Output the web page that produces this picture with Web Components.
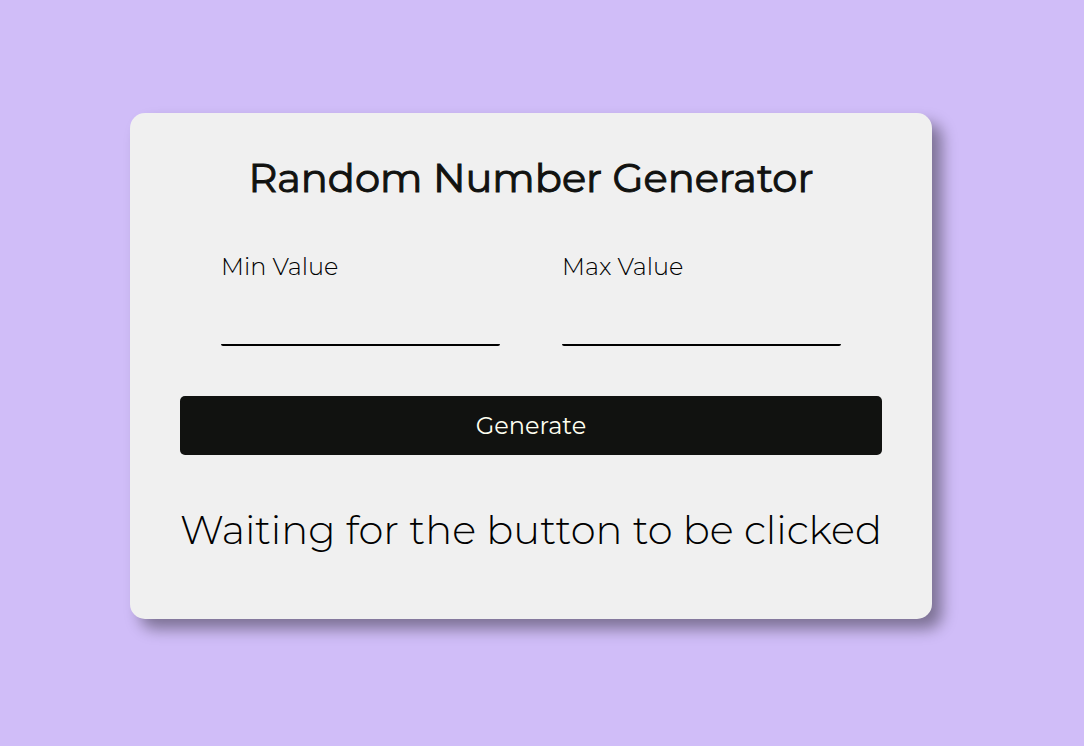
<!DOCTYPE html>
<html lang="en">
<head>
<meta charset="utf-8">
<title>Random Number Generator</title>
<style>
html,body{margin:0;height:100%}
body{min-height:100%;background:#d0bdf8;color:#111210;font-family:Montserrat,Inter,"Open Sans",sans-serif}
</style>
</head>
<body>
<number-generator>
<page-title slot="title">Random Number Generator</page-title>
<value-field slot="fields" label="Min Value"></value-field>
<value-field slot="fields" label="Max Value"></value-field>
<action-button slot="action">Generate</action-button>
<result-text slot="result">Waiting for the button to be clicked</result-text>
</number-generator>
<script>
const define=(name,html,setup)=>customElements.define(name,class extends HTMLElement{
  constructor(){
    super();
    const t=document.createElement('template');
    t.innerHTML=html;
    this.attachShadow({mode:'open'}).append(t.content.cloneNode(true));
  }
  connectedCallback(){if(setup)setup(this)}
});
define('page-title',`<style>:host{display:block}h1{margin:0;font-size:40px;line-height:50px;font-weight:400;-webkit-text-stroke:1px currentColor;text-align:center}</style><h1><slot></slot></h1>`);
define('value-field',`<style>:host{display:block;flex:1;min-width:0;contain:inline-size}label{display:block;color:#000;font-size:24px;line-height:30px;font-weight:300}input{display:block;box-sizing:border-box;width:100%;height:56px;margin:8px 0 0;padding:8px;border:0;border-bottom:2px solid #000;border-radius:2px;background:transparent;font:inherit;font-size:24px;color:inherit;outline:0}</style><label for="value"></label><input id="value" type="number">`,
 el=>{el.shadowRoot.querySelector('label').textContent=el.getAttribute('label')});
define('action-button',`<style>:host{display:block}button{display:block;width:100%;height:59px;border:0;border-radius:5px;background:#111210;color:#fffff0;font:inherit;font-size:24px;font-weight:400;cursor:pointer}</style><button type="button"><slot></slot></button>`);
define('result-text',`<style>:host{display:block}p{margin:0;color:#000;font-size:40px;line-height:50px;font-weight:300;text-align:center}</style><p><slot></slot></p>`);
define('number-generator',`<style>
:host{display:grid;place-items:center;min-height:100%;box-sizing:border-box;padding:0 22px 14px 0}
main{box-sizing:border-box;max-width:100%;padding:40px 50px 64px;border-radius:15px;background:#f0f0f0;box-shadow:10px 10px 15px rgba(0,0,0,.4)}
.fields{display:flex;gap:62px;margin:49px 41px 50px}
.result{margin-top:50px}
</style><main><slot name="title"></slot><div class="fields"><slot name="fields"></slot></div><slot name="action"></slot><div class="result"><slot name="result"></slot></div></main>`,
 el=>{el.querySelector('action-button').addEventListener('click',()=>{
  const [a,b]=[...el.querySelectorAll('value-field')].map(f=>Number(f.shadowRoot.querySelector('input').value));
  el.querySelector('result-text').textContent=Math.floor(Math.random()*(b-a+1))+a;
 })});
</script>
</body>
</html>
